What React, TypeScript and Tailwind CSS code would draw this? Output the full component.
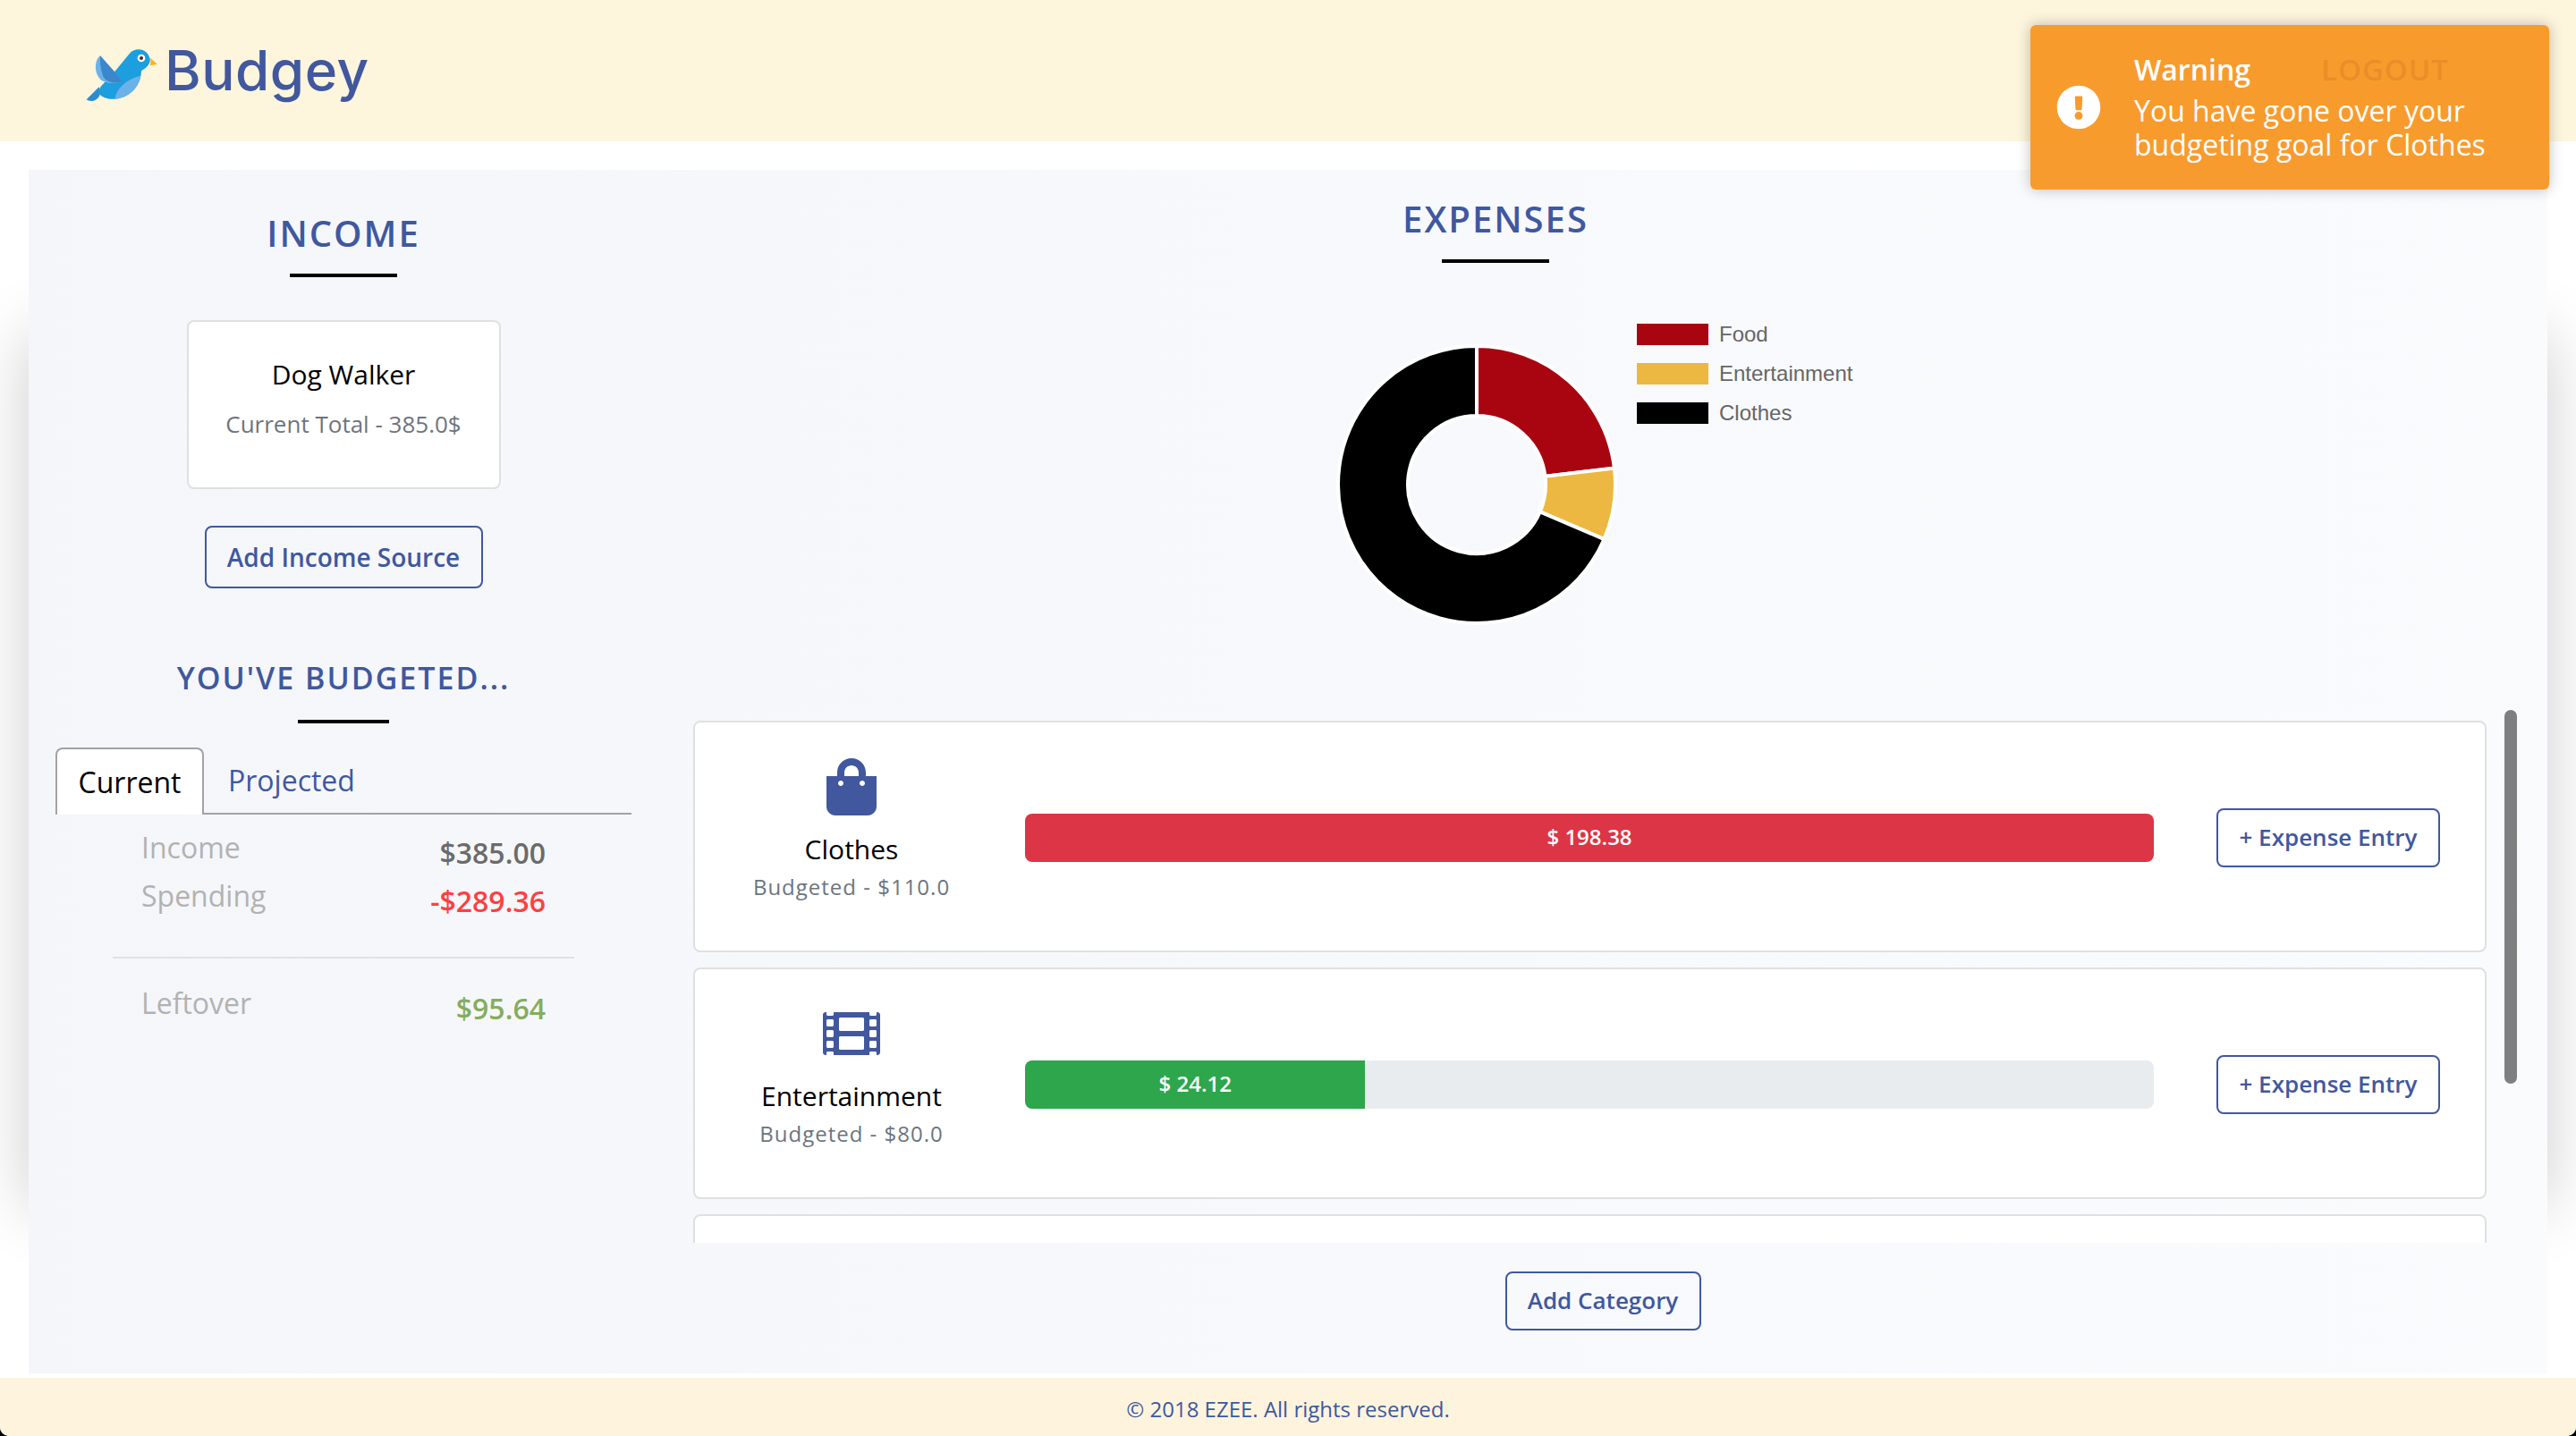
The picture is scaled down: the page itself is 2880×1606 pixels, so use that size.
import { FaExclamationCircle, FaFilm, FaShoppingBag } from 'react-icons/fa';

const SLICES = [
  { name: 'Food', color: '#a90510', value: 66.86 },
  { name: 'Entertainment', color: '#ecb841', value: 24.12 },
  { name: 'Clothes', color: '#000000', value: 198.38 },
];

const CATEGORIES = [
  { name: 'Clothes', budget: 110, spent: 198.38, icon: 'bag' },
  { name: 'Entertainment', budget: 80, spent: 24.12, icon: 'film' },
];

function arc(r: number, deg: number) {
  const a = ((deg - 90) * Math.PI) / 180;
  return [158 + r * Math.cos(a), 158 + r * Math.sin(a)];
}

function Donut() {
  const total = SLICES.reduce((sum, s) => sum + s.value, 0);
  let start = 0;
  return (
    <svg width="316" height="316" viewBox="0 0 316 316" className="mt-[22px] shrink-0">
      {SLICES.map(s => {
        const end = start + (s.value / total) * 360;
        const large = end - start > 180 ? 1 : 0;
        const [x1, y1] = arc(155, start);
        const [x2, y2] = arc(155, end);
        const [x3, y3] = arc(77, end);
        const [x4, y4] = arc(77, start);
        start = end;
        return (
          <path
            key={s.name}
            d={`M${x1} ${y1}A155 155 0 ${large} 1 ${x2} ${y2}L${x3} ${y3}A77 77 0 ${large} 0 ${x4} ${y4}Z`}
            fill={s.color}
            stroke="#ffffff"
            strokeWidth="4"
          />
        );
      })}
    </svg>
  );
}

function Bird() {
  return (
    <svg width="92" height="72" viewBox="0 0 276 216" className="shrink-0">
      <path d="M20 190L62 148C70 165 66 180 55 188C45 196 30 198 20 190Z" fill="#2f8bd0" />
      <path d="M120 90L165 35C180 15 222 15 232 50C236 62 232 76 204 94C202 150 160 186 115 188C92 190 72 182 62 170C62 160 64 152 68 146Z" fill="#1c9edf" />
      <path d="M66 43C45 60 45 105 70 125C90 138 120 138 142 128Z" fill="#6bb2e8" />
      <path d="M66 43L142 128C115 140 85 132 75 110C68 90 64 65 66 43Z" fill="#3b87cb" />
      <path d="M115 188C120 155 150 122 202 110C195 150 160 185 115 188Z" fill="#6bb2e8" />
      <path d="M234 50L258 72L232 76C236 68 236 60 234 50Z" fill="#fbb030" />
      <circle cx="204" cy="51" r="13" fill="#ffffff" />
      <circle cx="204" cy="51" r="6" fill="#4a2a20" />
    </svg>
  );
}

function Heading({ children, className }: { children: string; className: string }) {
  return <h2 className={`font-semibold text-[#3f58a0] text-center ${className}`}>{children}</h2>;
}

function SummaryRow({ label, value, color }: { label: string; value: string; color: string }) {
  return (
    <div className="flex justify-between h-[54px] text-[32px] leading-[54px] px-[32px]">
      <span className="text-[#b2b2b2]">{label}</span>
      <span className={`mt-[6px] font-semibold ${color}`}>{value}</span>
    </div>
  );
}

function CategoryCard({ name, budget, spent, icon }: { name: string; budget: number; spent: number; icon: string }) {
  const pct = Math.min((spent / budget) * 100, 100);
  return (
    <div className="h-[259px] shrink-0 flex bg-white border-2 border-[#e0e0e0] rounded-[8px] box-border">
      <div className="w-[369px] shrink-0 pr-[19px] pt-[40px] flex flex-col items-center">
        <div className="h-[64px] text-[#41589f]">
          {icon === 'bag' ? <FaShoppingBag size={64} /> : <FaFilm size={64} />}
        </div>
        <div className="mt-[16px] text-[30px] leading-[44px] text-black">{name}</div>
        <div className="mt-[2px] text-[24px] leading-[36px] tracking-[1px] text-[#6c757d]">Budgeted - ${budget.toFixed(1)}</div>
      </div>
      <div className="w-[1262px] shrink-0 h-[54px] mt-[102px] bg-[#e9ecef] rounded-[8px] overflow-hidden flex">
        <div
          className={`h-full flex items-center justify-center pb-[2px] text-white text-[24px] font-semibold ${spent > budget ? 'bg-[#dc3545]' : 'bg-[#2ea64b]'}`}
          style={{ width: `${pct}%` }}
        >
          $ {spent}
        </div>
      </div>
      <button className="ml-[70px] mt-[96px] w-[250px] h-[66px] pb-[2px] border-2 border-[#3f58a0] rounded-[8px] bg-white text-[#3f58a0] text-[26px] font-semibold">
        + Expense Entry
      </button>
    </div>
  );
}

export default function App() {
  return (
    <div className="w-[2880px] h-[1606px] bg-black font-['Open_Sans',sans-serif] overflow-hidden">
      <div className="relative w-full h-full flex flex-col bg-white rounded-b-[10px] overflow-hidden">
        {/* Header */}
        <header className="h-[158px] shrink-0 flex items-start justify-between bg-[#fef5dd] pl-[90px] pr-[142px] pt-[48px]">
          <div className="flex items-start gap-[2px]">
            <Bird />
            <span className="font-['Inter',sans-serif] font-medium text-[62px] leading-[72px] tracking-[0.5px] text-[#41589f] -mt-[5px]">Budgey</span>
          </div>
          <a className="text-[33px] font-semibold tracking-[1px] leading-[46px] text-[#3f58a0] mt-[7px]">LOGOUT</a>
        </header>

        {/* Main */}
        <main className="relative flex-1 px-[32px] pt-[32px]">
          <div aria-hidden className="absolute left-[32px] right-[32px] top-[217px] h-[975px] shadow-[0_0_70px_rgba(0,0,0,0.2)]" />
          <div className="relative h-[1346px] flex bg-gradient-to-r from-[#f5f6fa] to-[#fafbfd]">
            {/* Income column */}
            <section className="w-[704px] shrink-0 flex flex-col items-center">
              <Heading className="mt-[44px] text-[40px] leading-[54px] tracking-[2px]">INCOME</Heading>
              <div className="mt-[18px] w-[120px] h-[4px] bg-black" />
              <div className="mt-[48px] w-[351px] h-[189px] box-border bg-white border-2 border-[#e0e0e0] rounded-[8px] flex flex-col items-center">
                <div className="mt-[37px] text-[30px] leading-[44px] text-black">Dog Walker</div>
                <div className="mt-[15px] text-[26px] leading-[36px] text-[#6c757d]">Current Total - 385.0$</div>
              </div>
              <button className="mt-[41px] w-[311px] h-[70px] border-2 border-[#3f58a0] rounded-[8px] text-[#3f58a0] text-[28px] font-semibold">
                Add Income Source
              </button>
              <Heading className="mt-[75px] text-[34px] leading-[50px] tracking-[2px]">YOU'VE BUDGETED...</Heading>
              <div className="mt-[22px] w-[102px] h-[4px] bg-black" />
              <div className="mt-[27px] w-[644px] h-[75px] flex border-b-2 border-[#a3a3a3] text-[32px]">
                <div className="w-[166px] h-[75px] box-border bg-white border-2 border-b-0 border-[#a3a3a3] rounded-t-[8px] flex items-center justify-center text-black">Current</div>
                <div className="pl-[27px] h-[73px] flex items-center text-[#3f58a0]">Projected</div>
              </div>
              <div className="mt-[10px] w-[516px]">
                <SummaryRow label="Income" value="$385.00" color="text-[#6b6b6b]" />
                <SummaryRow label="Spending" value="-$289.36" color="text-[#ff3f3f]" />
                <div className="mt-[41px] h-[2px] bg-[#dee2e6]" />
                <div className="mt-[23px]">
                  <SummaryRow label="Leftover" value="$95.64" color="text-[#85ad5e]" />
                </div>
              </div>
            </section>

            {/* Expenses column */}
            <section className="flex-1 min-w-0 flex flex-col">
              <div className="w-[1872px] flex flex-col items-center">
                <Heading className="mt-[28px] text-[40px] leading-[54px] tracking-[2px]">EXPENSES</Heading>
                <div className="mt-[18px] w-[120px] h-[4px] bg-black" />
              </div>
              <div className="h-[444px] mt-[68px] shrink-0 flex items-start pl-[757px]">
                <Donut />
                <ul className="ml-[21px] flex flex-col gap-[20px] font-['Liberation_Sans',sans-serif] text-[24px] leading-[24px] text-[#666666]">
                  {SLICES.map(s => (
                    <li key={s.name} className="flex items-center gap-[12px]">
                      <span className="w-[80px] h-[24px] bg-[var(--swatch)]" style={{ '--swatch': s.color } as React.CSSProperties} />
                      {s.name}
                    </li>
                  ))}
                </ul>
              </div>
              <div className="relative shrink-0">
                <div className="h-[584px] pl-[39px] pr-[68px] overflow-hidden flex flex-col gap-[17px]">
                  {CATEGORIES.map(c => <CategoryCard key={c.name} {...c} />)}
                  <div className="h-[259px] shrink-0 bg-white border-2 border-[#e0e0e0] rounded-[8px]" />
                </div>
                <div className="absolute right-[34px] -top-[12px] w-[14px] h-[418px] rounded-full bg-[#7f7f7f]" />
              </div>
              <div className="mt-[32px] flex justify-center">
                <button className="w-[219px] h-[66px] pb-[2px] border-2 border-[#3f58a0] rounded-[8px] text-[#3f58a0] text-[26px] font-semibold">
                  Add Category
                </button>
              </div>
            </section>
          </div>
        </main>

        {/* Footer */}
        <footer className="h-[65px] shrink-0 flex items-center justify-center pt-[5px] bg-[#fef4dd] text-[24px] text-[#3f58a0]">
          © 2018 EZEE. All rights reserved.
        </footer>

        {/* Toast */}
        <div className="absolute left-[2270px] top-[28px] w-[580px] h-[184px] rounded-[6px] bg-[#f7931d]/92 shadow-[0_0_16px_rgba(0,0,0,0.25)] flex items-center text-white">
          <FaExclamationCircle size={50} className="ml-[29px] shrink-0" />
          <div className="ml-[37px]">
            <div className="-mt-[3px] mb-[5px] text-[32px] leading-[44px] font-semibold">Warning</div>
            <div className="text-[32px] leading-[38px]">You have gone over your<br />budgeting goal for Clothes</div>
          </div>
        </div>
      </div>
    </div>
  );
}
